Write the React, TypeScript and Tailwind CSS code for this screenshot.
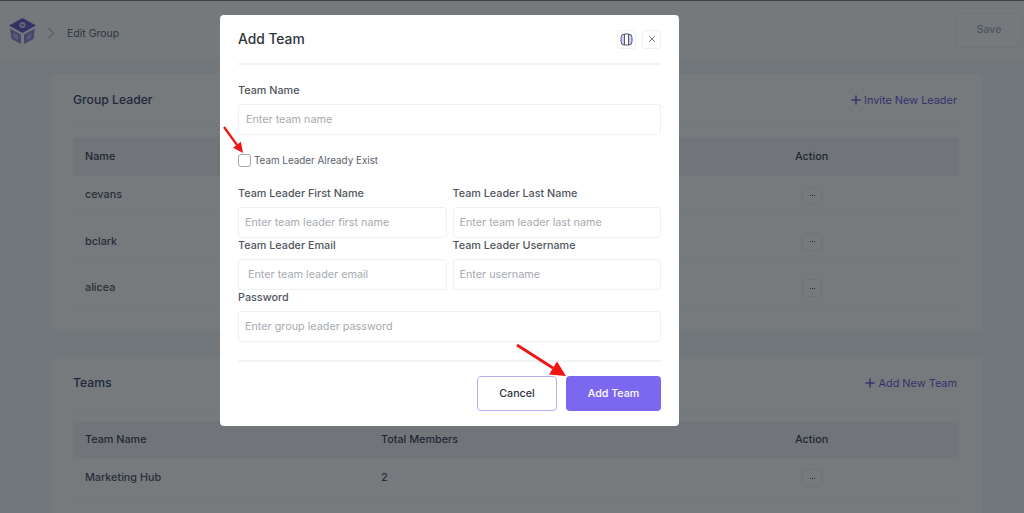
import { Plus, X, ChevronRight } from 'lucide-react'

const leaders = ['cevans', 'bclark', 'alicea']

function Logo() {
  return (
    <svg width="29" height="28" viewBox="0 0 29 28" fill="none">
      <path d="M14.5 1 L28 8.5 L14.5 16 L1 8.5 Z" fill="#5b4bc4" />
      <circle cx="14.5" cy="8" r="3" fill="#d9d6ef" />
      <path d="M13.5 6.5 L16.5 8 L13.5 9.5 Z" fill="#5b4bc4" />
      <path d="M2 11.5 L13 17.5 V27 L3.5 22 Z" fill="#5b4bc4" opacity="0.7" />
      <path d="M27 11.5 L16 17.5 V27 L25.5 22 Z" fill="#5b4bc4" opacity="0.7" />
      <path d="M5.5 16 L10 18.5 V23 L5.5 20.5 Z M23.5 16 L19 18.5 V23 L23.5 20.5 Z" fill="#fff" opacity="0.35" />
    </svg>
  )
}

function ColumnsIcon() {
  return (
    <svg width="13" height="13" viewBox="0 0 13 13" fill="none">
      <rect x="1" y="1" width="11" height="11" rx="3.5" fill="#cfcaf6" />
      <rect x="4.5" y="1" width="4" height="11" fill="#fff" />
      <rect x="1" y="1" width="11" height="11" rx="3.5" stroke="#555b66" />
      <path d="M4.5 1 V12 M8.5 1 V12" stroke="#555b66" />
    </svg>
  )
}

function ActionButton() {
  return (
    <div className="w-[20px] h-[18px] border border-[#f0f1f3] rounded-[3px] flex items-center justify-center gap-px">
      <span className="w-px h-px bg-gray-700" />
      <span className="w-px h-px bg-gray-700" />
      <span className="w-px h-px bg-gray-700" />
    </div>
  )
}

function Field({ label, placeholder, indent }: { label: string; placeholder: string; indent?: boolean }) {
  return (
    <div className="flex flex-col flex-1 min-w-0">
      <label className="text-[10.8px] font-medium leading-[15px] text-[#50555d]">{label}</label>
      <div
        className={`mt-[6px] h-[31px] pt-[2px] border border-[#eef0f3] rounded-[3px] flex items-center text-[10.8px] text-[#a6aab0] ${
          indent ? 'pl-[9px]' : 'pl-[6px]'
        }`}
      >
        {placeholder}
      </div>
    </div>
  )
}

function AddTeamModal() {
  return (
    <div className="w-[459px] h-[411px] bg-white rounded-[4px] px-[18px] flex flex-col">
      <div className="h-[50px] shrink-0 border-b-2 border-[#f2f3f5] flex items-center justify-between">
        <h2 className="text-[13.8px] font-medium text-[#2f343b]">Add Team</h2>
        <div className="flex items-center gap-[6px]">
          <div className="w-[19px] h-[19px] border border-[#f0f1f4] rounded-[3px] flex items-center justify-center">
            <ColumnsIcon />
          </div>
          <div className="w-[19px] h-[19px] border border-[#f0f1f4] rounded-[3px] flex items-center justify-center text-[#555b66]">
            <X className="w-[10px] h-[10px]" />
          </div>
        </div>
      </div>

      <div className="mt-[18px]">
        <label className="block text-[10.8px] font-medium leading-[15px] text-[#50555d]">Team Name</label>
        <div className="mt-[6px] h-[31px] pt-[2px] border border-[#eef0f3] rounded-[3px] flex items-center pl-[7px] text-[10.8px] text-[#a6aab0]">
          Enter team name
        </div>
      </div>

      <div className="relative mt-[19px] flex items-center gap-[3px] h-[13px]">
        <div className="w-[13px] h-[13px] border border-[#a4a8ad] rounded-[3px]" />
        <span className="text-[9.85px] text-[#5a606a]">Team Leader Already Exist</span>
        <svg className="absolute -left-[16px] -top-[28px]" width="24" height="30" viewBox="0 0 24 30">
          <path d="M2 1 L15 19" stroke="#f01414" strokeWidth="2.2" />
          <path d="M21 27 L18.9 15.8 L11 21.8 Z" fill="#f01414" />
        </svg>
      </div>

      <div className="mt-[19px] flex gap-[6px]">
        <Field label="Team Leader First Name" placeholder="Enter team leader first name" />
        <Field label="Team Leader Last Name" placeholder="Enter team leader last name" />
      </div>
      <div className="flex gap-[6px]">
        <Field label="Team Leader Email" placeholder="Enter team leader email" indent />
        <Field label="Team Leader Username" placeholder="Enter username" />
      </div>
      <div className="flex">
        <Field label="Password" placeholder="Enter group leader password" />
      </div>

      <div className="mt-[18px] border-t-2 border-[#f2f3f5] flex justify-end gap-[9px] pt-[14px] relative">
        <button className="w-[80px] h-[35px] pt-[2px] rounded-[4px] bg-white border border-[#b9aef5] text-[10.7px] font-medium text-[#2f343b]">
          Cancel
        </button>
        <button className="w-[95px] h-[35px] pt-[2px] rounded-[4px] bg-[#7c68ee] text-[10.7px] font-medium text-white">
          Add Team
        </button>
        <svg className="absolute left-[277px] -top-[19px]" width="54" height="40" viewBox="0 0 54 40">
          <path d="M2 2 L38 25" stroke="#f01414" strokeWidth="2.8" />
          <path d="M51 33 L42 18.5 L34 31.5 Z" fill="#f01414" />
        </svg>
      </div>
    </div>
  )
}

export default function App() {
  return (
    <div className="relative h-[513px] overflow-hidden bg-[#f6f7f9] font-['Inter',sans-serif]">
      <header className="h-[61px] border-b border-gray-100 bg-[#fcfcfd] flex items-center pl-[8px] pr-px">
        <div className="mt-[2px]">
          <Logo />
        </div>
        <ChevronRight className="w-5 h-5 ml-[4px] mt-[6px] text-gray-400" strokeWidth={1.25} />
        <span className="ml-[6px] mt-[8px] text-[10.5px] text-gray-600">Edit Group</span>
        <button className="ml-auto w-[68px] h-[35px] border border-[#f0f1f3] rounded-[3px] text-[10.7px] font-medium text-gray-400">
          Save
        </button>
      </header>

      <main className="pl-[51px] pr-[41px] pt-[12px] flex flex-col gap-[24px]">
        <section className="h-[259px] bg-white border border-gray-100 rounded-[4px] pl-[21px] pr-[23px]">
          <div className="h-[53px] border-b border-gray-100 flex items-center justify-between">
            <h3 className="text-[12.2px] font-medium text-[#2b2f5c]">Group Leader</h3>
            <span className="flex items-center gap-px text-[10.9px] text-[#5b4bd8] mr-[2px]">
              <Plus className="w-[14px] h-[14px]" strokeWidth={2.5} />
              Invite New Leader
            </span>
          </div>
          <div className="mt-[10px] h-[39px] pt-[2px] bg-[#f2f3f5] flex items-center text-[10.8px] font-medium text-[#2b2f45]">
            <span className="pl-[12px]">Name</span>
            <span className="ml-auto w-[164px]">Action</span>
          </div>
          {leaders.map((name, i) => (
            <div
              key={name}
              className={`border-b border-gray-100 flex items-center text-[10.8px] font-medium text-[#3d4155] ${
                i === 0 ? 'h-[38px] pt-[2px]' : 'h-[46.5px] pt-[10px]'
              }`}
            >
              <span className="pl-[12px]">{name}</span>
              <span className="ml-auto w-[157px]">
                <ActionButton />
              </span>
            </div>
          ))}
        </section>

        <section className="h-[260px] bg-white border border-gray-100 rounded-[4px] pl-[21px] pr-[23px]">
          <div className="h-[54px] border-b border-gray-100 flex items-center justify-between">
            <h3 className="text-[12.2px] font-medium text-[#2b2f5c]">Teams</h3>
            <span className="flex items-center gap-px text-[10.9px] text-[#5b4bd8] mr-[2px]">
              <Plus className="w-[14px] h-[14px]" strokeWidth={2.5} />
              Add New Team
            </span>
          </div>
          <div className="mt-[10px] h-[38px] bg-[#f2f3f5] flex items-center text-[10.8px] font-medium text-[#2b2f45]">
            <span className="pl-[12px] w-[308px]">Team Name</span>
            <span>Total Members</span>
            <span className="ml-auto w-[164px]">Action</span>
          </div>
          <div className="h-[39px] border-b border-gray-100 flex items-center text-[10.8px] font-medium text-[#3d4155]">
            <span className="pl-[12px] w-[308px]">Marketing Hub</span>
            <span>2</span>
            <span className="ml-auto w-[157px]">
              <ActionButton />
            </span>
          </div>
        </section>
      </main>

      <div className="fixed inset-0 bg-[#1a2226]/60 border-t border-[#3d424a] flex justify-start pl-[220px] pt-[14px]">
        <AddTeamModal />
      </div>
    </div>
  )
}
